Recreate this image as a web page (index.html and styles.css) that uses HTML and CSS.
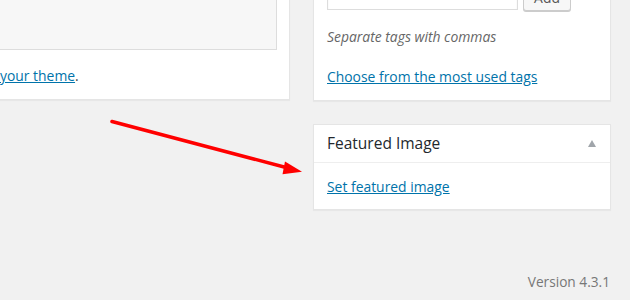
FILE: index.html
```html
<!DOCTYPE html>
<html lang="en">
<head>
    <meta charset="UTF-8">
    <title>Edit Post</title>
    <link rel="stylesheet" href="styles.css">
</head>
<body>
    <div class="columns">
        <div class="main">
            <div class="postbox excerpt-box">
                <div class="excerpt-field"></div>
                <p class="excerpt-note"><a href="#">your theme</a>.</p>
            </div>
        </div>

        <div class="sidebar">
            <div class="postbox tags-box">
                <div class="tag-row">
                    <input type="text" class="tag-input">
                    <button type="button" class="button">Add</button>
                </div>
                <p class="howto">Separate tags with commas</p>
                <p class="tag-cloud-link"><a href="#">Choose from the most used tags</a></p>
            </div>

            <div class="postbox featured-box">
                <div class="hndle">
                    <h2>Featured Image</h2>
                    <span class="toggle-indicator"></span>
                </div>
                <div class="inside">
                    <a href="#">Set featured image</a>
                </div>
            </div>
        </div>
    </div>

    <div class="footer">Version 4.3.1</div>

    <!-- annotation arrow drawn over the screen -->
    <svg class="arrow" width="630" height="300" viewBox="0 0 630 300">
        <line x1="112" y1="121.5" x2="286" y2="167.5" stroke="#ff0000" stroke-width="3.5" stroke-linecap="round"/>
        <polygon points="285,161.5 302,171.8 282.5,174.2" fill="#ff0000"/>
    </svg>
</body>
</html>
```

FILE: styles.css
```css
* {
    box-sizing: border-box;
}

body {
    margin: 0;
    width: 630px;
    height: 300px;
    overflow: hidden;
    position: relative;
    background: #f1f1f1;
    font-family: 'Open Sans', sans-serif;
    font-size: 13.9px;
    line-height: 19px;
    color: #444;
}

a {
    color: #0073aa;
}

p {
    margin: 0;
}

.columns {
    display: flex;
    gap: 23px;
    margin-top: -40px;
    align-items: flex-start;
}

.postbox {
    background: #fff;
    border: 1px solid #e5e5e5;
    box-shadow: 0 1px 1px rgba(0, 0, 0, 0.04);
}

/* left column, excerpt box (mostly offscreen) */
.main {
    width: 302px;
    margin-left: -12px;
}

.excerpt-box {
    padding: 0 12px 14px 11px;
}

.excerpt-field {
    height: 89px;
    background: #f7f7f7;
    border: 1px solid #ddd;
    margin-left: -10px;
}

.excerpt-note {
    margin-top: 16px;
}

/* sidebar */
.sidebar {
    width: 298px;
}

.tags-box {
    padding: 0 12px 14px 13px;
}

.tag-row {
    display: flex;
    gap: 5px;
    margin-top: 21px;
}

.tag-input {
    width: 191px;
    height: 28px;
    border: 1px solid #ddd;
    box-shadow: inset 0 1px 2px rgba(0, 0, 0, 0.07);
    background: #fff;
}

.button {
    width: 48px;
    height: 28px;
    margin-top: 1px;
    background: #f7f7f7;
    border: 1px solid #ccc;
    border-radius: 3px;
    box-shadow: 0 1px 0 #ccc;
    font-family: 'Open Sans', sans-serif;
    font-size: 13.9px;
    color: #555;
    padding: 0;
}

.howto {
    margin-top: 16px;
    font-style: italic;
    color: #666;
}

.tag-cloud-link {
    margin-top: 21px;
}

.featured-box {
    margin-top: 23px;
}

.hndle {
    display: flex;
    align-items: center;
    padding: 9px 14px 9px 13px;
    border-bottom: 1px solid #eee;
}

.hndle h2 {
    margin: 0;
    font-size: 15.5px;
    font-weight: 400;
    line-height: 19px;
    color: #23282d;
}

.toggle-indicator {
    margin-left: auto;
    width: 0;
    height: 0;
    border-left: 4.5px solid transparent;
    border-right: 4.5px solid transparent;
    border-bottom: 7px solid #a0a5aa;
}

.featured-box .inside {
    padding: 14px 13px 13px;
}

.footer {
    margin-top: 62px;
    padding-right: 20px;
    text-align: right;
    font-size: 13.7px;
    color: #777;
}

.arrow {
    position: absolute;
    top: 0;
    left: 0;
    pointer-events: none;
}
```
